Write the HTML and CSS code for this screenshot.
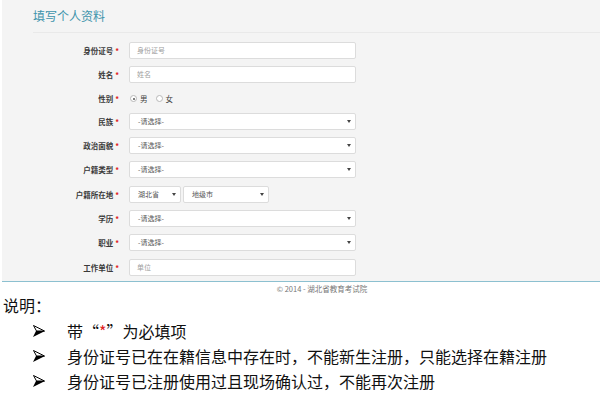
FILE: index.html
```html
<!DOCTYPE html>
<html lang="zh">
<head>
<meta charset="utf-8">
<title>填写个人资料</title>
<link rel="stylesheet" href="styles.css">
</head>
<body>
<div class="panel">
  <div class="head"><h1 class="title">填写个人资料</h1></div>
  <div class="form">
    <div class="row"><label class="lbl">身份证号<i>*</i></label><div class="ctl input ph">身份证号</div></div>
    <div class="row"><label class="lbl">姓名<i>*</i></label><div class="ctl input ph">姓名</div></div>
    <div class="row radio-row"><label class="lbl">性别<i>*</i></label>
      <div class="radios"><span class="radio on"></span><span class="rtxt">男</span><span class="radio"></span><span class="rtxt">女</span></div>
    </div>
    <div class="row"><label class="lbl">民族<i>*</i></label><div class="ctl select">-请选择-</div></div>
    <div class="row"><label class="lbl">政治面貌<i>*</i></label><div class="ctl select">-请选择-</div></div>
    <div class="row"><label class="lbl">户籍类型<i>*</i></label><div class="ctl select">-请选择-</div></div>
    <div class="row"><label class="lbl">户籍所在地<i>*</i></label>
      <div class="pair"><div class="ctl select prov">湖北省</div><div class="ctl select city">地级市</div></div>
    </div>
    <div class="row"><label class="lbl">学历<i>*</i></label><div class="ctl select">-请选择-</div></div>
    <div class="row"><label class="lbl">职业<i>*</i></label><div class="ctl select">-请选择-</div></div>
    <div class="row"><label class="lbl">工作单位<i>*</i></label><div class="ctl input ph">单位</div></div>
  </div>
</div>
<div class="footer">© 2014 - 湖北省教育考试院</div>
<div class="notes">
  <div class="notes-title">说明：</div>
  <ul class="list">
    <li><svg class="arrow" viewBox="0 0 12 12" width="12" height="12"><path d="M0.5 0.5 L11.5 6 L3.5 6 Z" fill="none" stroke="#000" stroke-width="1"/><path d="M0 12 L12 6 L3 6 Z" fill="#000"/></svg><span>带“<em>*</em>”为必填项</span></li>
    <li><svg class="arrow" viewBox="0 0 12 12" width="12" height="12"><path d="M0.5 0.5 L11.5 6 L3.5 6 Z" fill="none" stroke="#000" stroke-width="1"/><path d="M0 12 L12 6 L3 6 Z" fill="#000"/></svg><span>身份证号已在在籍信息中存在时，不能新生注册，只能选择在籍注册</span></li>
    <li><svg class="arrow" viewBox="0 0 12 12" width="12" height="12"><path d="M0.5 0.5 L11.5 6 L3.5 6 Z" fill="none" stroke="#000" stroke-width="1"/><path d="M0 12 L12 6 L3 6 Z" fill="#000"/></svg><span>身份证号已注册使用过且现场确认过，不能再次注册</span></li>
  </ul>
</div>
</body>
</html>
```
FILE: styles.css
```css
* { box-sizing: border-box; }
body {
  margin: 0;
  background: #fff;
  font-family: "Noto Sans CJK SC", "Liberation Sans", sans-serif;
  color: #333;
}
.panel {
  margin-left: 2px;
  background: #f4f4f4;
  border-bottom: 1px solid #8cc0d0;
  height: 282px;
}
.head {
  margin-left: 31px;
  height: 33px;
  border-bottom: 1px solid #e9e9e9;
}
.title {
  margin: 0;
  padding-top: 7px;
  font-size: 12px;
  line-height: 18px;
  font-weight: normal;
  color: #3d93ab;
}
.form {
  padding-top: 9px;
  display: flex;
  flex-direction: column;
  gap: 7.3px;
}
.row {
  display: flex;
  align-items: center;
  height: 17px;
}
.radio-row { height: 14px; margin-top: 1px; }
.lbl {
  width: 118px;
  text-align: right;
  font-size: 7.5px;
  font-weight: bold;
  color: #3a3a3a;
  padding-right: 1px;
  margin-right: 9px;
}
.lbl i {
  font-style: normal;
  color: #e02020;
  margin-left: 2px;
}
.ctl {
  position: relative;
  height: 17px;
  width: 227px;
  background: #fff;
  border: 1px solid #dcdcdc;
  border-radius: 2px;
  font-size: 7px;
  line-height: 15px;
  padding-left: 7px;
  color: #555;
}
.ph { color: #a0a0a0; }
.select { padding-left: 8px; }
.select::after {
  content: "";
  position: absolute;
  right: 4px;
  top: 6px;
  border-left: 2px solid transparent;
  border-right: 2px solid transparent;
  border-top: 3px solid #444;
}
.pair { display: flex; gap: 2px; }
.prov { width: 52px; }
.city { width: 86px; }
.radios {
  display: flex;
  align-items: center;
  font-size: 7.5px;
  color: #444;
}
.radio {
  width: 7px;
  height: 7px;
  border: 1px solid #b8b8b8;
  border-radius: 50%;
  background: #fff;
  margin-left: 1px;
  margin-right: 3px;
  position: relative;
}
.radio.on::after {
  content: "";
  position: absolute;
  left: 1.5px;
  top: 1.5px;
  width: 2px;
  height: 2px;
  border-radius: 50%;
  background: #555;
}
.rtxt { margin-right: 7px; }
.footer {
  text-align: center;
  font-size: 7.5px;
  color: #777;
  line-height: 12px;
  padding-top: 1px;
  padding-left: 44px;
}
.notes {
  font-size: 16px;
  color: #111;
}
.notes-title {
  margin-left: 3px;
  line-height: 20px;
}
.list {
  list-style: none;
  margin: 3px 0 0;
  padding: 0;
}
.list li {
  display: flex;
  align-items: center;
  height: 25px;
}
.arrow {
  flex: none;
  margin-left: 33px;
  margin-right: 22px;
}
.list em {
  font-style: normal;
  color: #e02020;
}
```
